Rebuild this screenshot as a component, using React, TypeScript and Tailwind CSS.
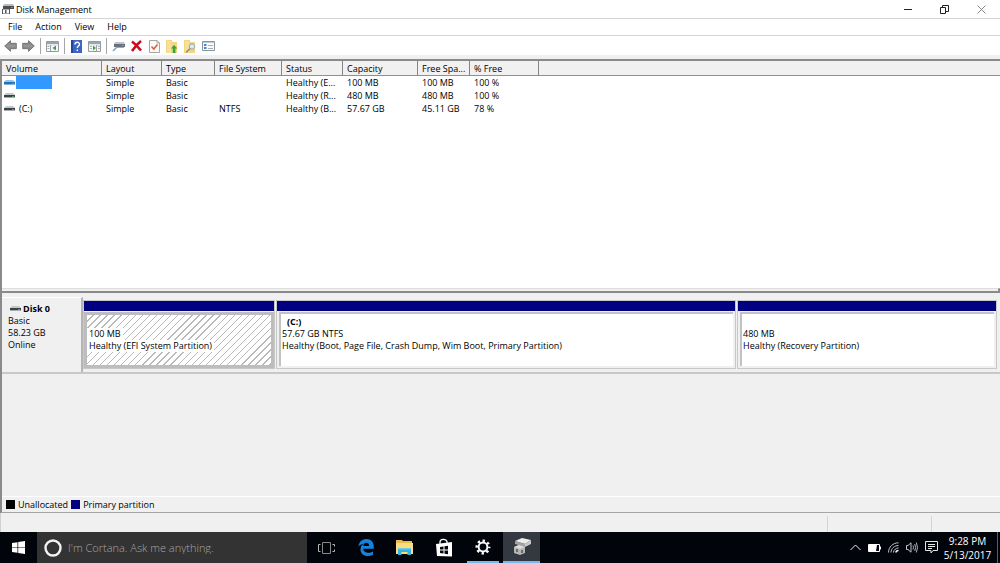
import type { ReactNode } from "react";

const columns = [
  { label: "Volume", width: "w-[100px]" },
  { label: "Layout", width: "w-[60px]" },
  { label: "Type", width: "w-[53px]" },
  { label: "File System", width: "w-[67px]" },
  { label: "Status", width: "w-[61px]" },
  { label: "Capacity", width: "w-[75px]" },
  { label: "Free Spa...", width: "w-[52px]" },
  { label: "% Free", width: "w-[69px]" },
];

const volumes = [
  { name: "", selected: true, cells: ["Simple", "Basic", "", "Healthy (E...", "100 MB", "100 MB", "100 %"] },
  { name: "", selected: false, cells: ["Simple", "Basic", "", "Healthy (R...", "480 MB", "480 MB", "100 %"] },
  { name: "(C:)", selected: false, cells: ["Simple", "Basic", "NTFS", "Healthy (B...", "57.67 GB", "45.11 GB", "78 %"] },
];

const partitions = [
  { name: "", size: "100 MB", status: "Healthy (EFI System Partition)", selected: true },
  {
    name: "(C:)",
    size: "57.67 GB NTFS",
    status: "Healthy (Boot, Page File, Crash Dump, Wim Boot, Primary Partition)",
    selected: false,
  },
  { name: "", size: "480 MB", status: "Healthy (Recovery Partition)", selected: false },
];

function DriveIcon({ selected = false }: { selected?: boolean }) {
  return (
    <svg width="11" height="6" viewBox="0 0 11 6" className="shrink-0">
      <path d="M2 0h7l2 2H0z" fill={selected ? "#8cc4f5" : "#c4c7c9"} />
      <path d="M0 2h11v2H0z" fill={selected ? "#2c6ea8" : "#3d4244"} />
      <path d="M8 3h2v1H8z" fill="#3fae6c" />
      <path d="M0 4h11v1H0z" fill={selected ? "#7fb6e6" : "#a9adaf"} />
    </svg>
  );
}

function AppIcon() {
  return (
    <svg width="13" height="12" viewBox="0 0 13 12" className="shrink-0">
      <path d="M3 1h9l1 2-1 3H2V3z" fill="#b9bcbe" />
      <path d="M2 3h11v3H2z" fill="#4a4e50" />
      <path d="M10 4h2v1h-2z" fill="#39b06a" />
      <path d="M1 6h8v5H1z" fill="#a4a7a9" />
      <path d="M2 7h2v3H2zM6 7h2v3H6z" fill="#fff" />
      <path d="M1 6h1v5H1zM4 7h1v3H4zM8 6h1v5H8z" fill="#55595b" />
    </svg>
  );
}

function ArrowIcon({ forward = false }: { forward?: boolean }) {
  return (
    <svg width="13" height="12" viewBox="0 0 13 12" className={forward ? "rotate-180" : ""}>
      <path d="M.7 6 6.500.7v2.600h5.800v5.400H6.500v2.600z" fill="#8b8b8b" stroke="#707070" strokeWidth="0.900" />
      <path d="M3 6h8.500" stroke="#a0a0a0" strokeWidth="1" />
    </svg>
  );
}

function PaneIcon({ right = false }: { right?: boolean }) {
  return (
    <svg width="13" height="12" viewBox="0 0 13 12">
      <path d="M.5 1.500h12v10H.5z" fill="#f7f8f9" stroke="#969b9f" />
      <path d="M1 2h11v2H1z" fill="#9da5ac" />
      <path d="M1 5h11" stroke="#d4d8db" />
      {right ? (
        <>
          <path d="M8.500 5v6" stroke="#a0a5a9" />
          <path d="M10 6.500h2M10 8.500h2M2 6.500h2M2 8.500h2" stroke="#a9b3bc" />
          <path d="m5 5.500 3 2.500-3 2.500z" fill="#36a936" />
        </>
      ) : (
        <>
          <path d="M4.500 5v6" stroke="#a0a5a9" />
          <path d="M1.500 6.500h2M1.500 8.500h2" stroke="#a9b3bc" />
          <path d="M10 5.500 6.500 8l3.500 2.500z" fill="#36a936" />
        </>
      )}
    </svg>
  );
}

function HelpIcon() {
  return (
    <svg width="11" height="13" viewBox="0 0 11 13">
      <path d="M0 0h11v13H0z" fill="#3f65c2" />
      <path d="M0 0h2v13H0z" fill="#2446a0" />
      <path d="M4 4.500c0-3 4.500-3 4.500-.3C8.500 6 6.300 6 6.300 8M6.300 9.500v1.500" fill="none" stroke="#fff" strokeWidth="1.400" />
    </svg>
  );
}

function DriveKeyIcon() {
  return (
    <svg width="13" height="12" viewBox="0 0 13 12">
      <path d="M3 2h9l1 2H2z" fill="#c0c5c9" />
      <path d="M2 4h11v3H2z" fill="#69727a" />
      <path d="M10 5h2v1h-2z" fill="#47b984" />
      <path d="M4 7h8v1H4z" fill="#a4abb0" />
      <path d="m5 7-4 4" stroke="#7fa0b6" strokeWidth="1.500" />
    </svg>
  );
}

function DeleteIcon() {
  return (
    <svg width="13" height="12" viewBox="0 0 13 12">
      <path d="M2 1.500Q6 4.500 11 10.500M11 1Q6.500 4.500 2 11" fill="none" stroke="#cc0a1e" strokeWidth="2.600" />
    </svg>
  );
}

function CheckDocIcon() {
  return (
    <svg width="11" height="13" viewBox="0 0 11 13">
      <path d="M.5.5H8L10.500 3v9.500H.5z" fill="#fafafa" stroke="#a5a5a5" />
      <path d="M8 .5V3h2.500" fill="none" stroke="#a5a5a5" />
      <path d="m2.500 6.500 2.300 2.500 3.700-4.500" fill="none" stroke="#e05a34" strokeWidth="1.500" />
    </svg>
  );
}

function FolderIcon({ search = false }: { search?: boolean }) {
  return (
    <svg width="12" height="13" viewBox="0 0 12 13">
      <path d="M0 0h6v2h5v11H0z" fill="#f3d681" />
      <path d="M1 1h4v12H1z" fill="#f8e09a" />
      {search ? (
        <>
          <path d="m6 8.500-4 4" stroke="#9a8a63" strokeWidth="1.500" />
          <circle cx="8" cy="6.500" r="2.700" fill="#d9edf5" stroke="#8aa5ad" />
        </>
      ) : (
        <path d="M8 5 5 8.500h1.800V13h2.600V8.500H11.500z" fill="#37a637" />
      )}
    </svg>
  );
}

function PropertiesIcon() {
  return (
    <svg width="13" height="11" viewBox="0 0 13 11">
      <path d="M.5.5h12v9H.5z" fill="#f8fafb" stroke="#8b949b" />
      <path d="M1 1.500h11" stroke="#c2cad0" />
      <path d="M2 3h2.500v2H2zM2 6h2.500v2H2z" fill="#4388c7" />
      <path d="M6 4.500h5M6 7.500h5" stroke="#a8b0b6" />
    </svg>
  );
}

function ToolButton({ label, children }: { label: string; children: ReactNode }) {
  return (
    <button aria-label={label} className="flex h-[18px] w-[18px] items-center justify-center">
      {children}
    </button>
  );
}

function ToolSeparator() {
  return (
    <div className="flex w-1.5 justify-center py-px">
      <div className="w-px bg-[#a5a5a5]" />
    </div>
  );
}

function TitleBar() {
  return (
    <header className="flex h-[19px] shrink-0 items-center border-b border-[#d5d5d5] bg-white pl-px">
      <AppIcon />
      <h1 className="flex-1 pl-0.5">Disk Management</h1>
      <button aria-label="Minimize" className="flex h-full w-9 items-center justify-center">
        <svg width="9" height="9" viewBox="0 0 9 9">
          <path d="M0 4.500h8" stroke="#222" />
        </svg>
      </button>
      <button aria-label="Restore" className="flex h-full w-9 items-center justify-center">
        <svg width="9" height="9" viewBox="0 0 9 9" fill="none" stroke="#222">
          <path d="M.5 2.500h5v6h-5z" />
          <path d="M2.500 2.500v-2h6v6h-3" />
        </svg>
      </button>
      <button aria-label="Close" className="flex h-full w-[38px] items-center justify-center">
        <svg width="9" height="9" viewBox="0 0 9 9">
          <path d="m.5.5 8 8M8.500.5l-8 8" stroke="#777" strokeWidth="0.900" />
        </svg>
      </button>
    </header>
  );
}

function VolumeTable() {
  return (
    <section className="h-[234px] shrink-0 border-l-2 border-t-2 border-[#8a8a8a] bg-white">
      <div className="flex h-full flex-col">
        <div className="flex-1">
          <table className="w-full table-fixed border-separate border-spacing-0 text-left">
            <thead>
              <tr className="h-[15px] bg-[#f1f1f1]">
                {columns.map((column) => (
                  <th
                    key={column.label}
                    className={`${column.width} overflow-hidden border-b border-r border-b-[#8f8f8f] border-r-[#858585] p-0 pl-1 font-normal whitespace-nowrap`}
                  >
                    {column.label}
                  </th>
                ))}
                <td className="border-b border-[#8f8f8f] p-0" />
              </tr>
            </thead>
            <tbody>
              {volumes.map((volume, index) => (
                <tr key={index} className="h-[13px]">
                  <td className="p-0">
                    <div className="flex h-[13px] items-center pl-0.5">
                      <DriveIcon selected={volume.selected} />
                      <span className={volume.selected ? "ml-px h-[13px] w-9 bg-[#3399ff]" : "pl-1"}>{volume.name}</span>
                    </div>
                  </td>
                  {volume.cells.map((cell, i) => (
                    <td key={i} className="p-0 pl-1 whitespace-nowrap">
                      {cell}
                    </td>
                  ))}
                  <td className="p-0" />
                </tr>
              ))}
            </tbody>
          </table>
        </div>
        {/* Splitter */}
        <div className="h-[5px] border-b-2 border-r-2 border-t border-b-[#8a8a8a] border-r-[#8a8a8a] border-t-[#dedede] bg-[#f0f0f0]" />
      </div>
    </section>
  );
}

function Partition({ name, size, status, selected }: (typeof partitions)[number]) {
  return (
    <article className="flex flex-col border border-[#c8c8c8] bg-[#f0f0f0]">
      <div className="h-2.5 bg-[#000080]" />
      <div
        className={`mt-px flex-1 leading-3 ${
          selected
            ? "border-[3px] border-[#bdbdbd] bg-[repeating-linear-gradient(135deg,#ffffff_0px,#ffffff_4px,#b9b9b9_4px,#b9b9b9_5px)] pt-px"
            : "mx-0.5 mb-0.5 border-l-2 border-t-2 border-[#c2c2c2] bg-white pl-px pt-0.5"
        }`}
      >
        <h3 className="h-3 pl-[5px] font-bold">{name}</h3>
        <p>
          <span className={selected ? "inline-block bg-white px-0.5" : ""}>{size}</span>
        </p>
        <p>
          <span className={selected ? "inline-block bg-white px-0.5" : ""}>{status}</span>
        </p>
      </div>
    </article>
  );
}

function DiskPane() {
  return (
    <section className="flex flex-1 flex-col border-b border-l-2 border-[#a5a5a5] border-l-[#8a8a8a]">
      <div className="mt-1 flex h-[77px] border-b-2 border-[#c8c8c8]">
        <div className="w-[81px] border-r-2 border-t border-r-[#b5b5b5] border-t-white pl-1.5 pt-[5px] leading-3">
          <h2 className="flex items-center gap-0.5 pl-0.5 font-bold">
            <DriveIcon />
            Disk 0
          </h2>
          <p>Basic</p>
          <p>58.23 GB</p>
          <p>Online</p>
        </div>
        <div className="grid flex-1 grid-cols-[192fr_460fr_260fr] gap-px pb-[3px] pr-[3px] pt-[3px]">
          {partitions.map((partition) => (
            <Partition key={partition.status} {...partition} />
          ))}
        </div>
      </div>
      <div className="flex-1" />
      <div className="flex h-4 items-center border-t border-white pl-1">
        <span className="mr-[3px] h-[9px] w-[9px] bg-black" />
        Unallocated
        <span className="ml-[3px] mr-[3px] h-[9px] w-[9px] bg-[#000080]" />
        Primary partition
      </div>
    </section>
  );
}

function TaskButton({ label, state = "", children }: { label: string; state?: string; children: ReactNode }) {
  return (
    <button
      aria-label={label}
      className={`flex w-[37px] flex-col items-center ${state === "active" ? "bg-[#343840]" : ""}`}
    >
      <span className="flex flex-1 items-center">{children}</span>
      {state && <span className={`h-0.5 bg-[#76b9ed] ${state === "active" ? "w-full" : "w-8"}`} />}
    </button>
  );
}

function Taskbar() {
  return (
    <footer className="flex h-[31px] shrink-0 bg-[#02040b] text-white">
      <button aria-label="Start" className="flex w-[37px] items-center justify-center">
        <svg width="13" height="13" viewBox="0 0 13 13" fill="#fff">
          <path d="M0 2 5.500 1.200V6.200H0zM6.200 1.100 13 0v6.200H6.200zM0 6.800h5.500v5L0 11zM6.200 6.800H13V13l-6.800-1z" />
        </svg>
      </button>
      <label className="flex w-[270px] items-center gap-1.5 bg-[#333333] pl-[7px]">
        <svg width="18" height="18" viewBox="0 0 18 18">
          <circle cx="9" cy="9" r="7.500" fill="none" stroke="#f2f2f2" strokeWidth="2.400" />
        </svg>
        <input
          aria-label="Search"
          placeholder="I'm Cortana. Ask me anything."
          className="min-w-0 flex-1 bg-transparent text-[11px] font-light outline-none placeholder:text-[#a5a5a5]"
        />
      </label>
      <nav className="ml-px flex flex-1 gap-0.5">
        <TaskButton label="Task View">
          <svg width="17" height="12" viewBox="0 0 17 12" fill="none" stroke="#b5b5b5">
            <path d="M4.500.5h8v11h-8z" stroke="#888" />
            <path d="M2.500 2.500h-2v7h2M14.500 2.500h2v2M14.500 9.500h2v-2" />
          </svg>
        </TaskButton>
        <TaskButton label="Edge">
          <svg width="16" height="17" viewBox="0 0 16 17">
            <path
              d="M.3 7.600C1 2.800 4.300 0 8.400 0 13 0 15.800 3.300 15.800 7.800v2H5.200c.2 2.800 2.400 4 5.100 4 1.800 0 3.400-.5 4.700-1.300v3.300c-1.500.8-3.300 1.200-5.300 1.200-4.400 0-7.200-2.600-7.200-6.500 0-2.600 1.300-4.700 3.400-5.800C3.500 5 1.600 6 .3 7.600zM5.300 7h5.800c0-2.100-1-3.200-2.800-3.200C6.600 3.800 5.500 5.100 5.300 7z"
              fill="#1583dc"
            />
          </svg>
        </TaskButton>
        <TaskButton label="File Explorer">
          <svg width="17" height="15" viewBox="0 0 17 15">
            <path d="M0 0h6l1 1h9v3H0z" fill="#e9bb4c" />
            <path d="M0 3h17v11H0z" fill="#fbdc82" />
            <path d="M2 8h13v7h-3.500v-3h-6v3H2z" fill="#38b3d8" />
            <path d="M2 8h13v1.500H2z" fill="#70cde7" />
          </svg>
        </TaskButton>
        <TaskButton label="Store">
          <svg width="18" height="20" viewBox="0 0 18 20">
            <path d="M5 6V4c0-3.500 6-3.500 7-.5V5" fill="none" stroke="#fff" strokeWidth="1.300" />
            <path d="m1 6 16-2v14.500L2 18z" fill="#fff" />
            <path d="m5 9 3.500-.5v3H5zM9.500 8.300l3.500-.5v3.700H9.500zM5 12.500h3.500v3L5 15zM9.500 12.500H13v3.700l-3.500-.5z" fill="#05070e" />
          </svg>
        </TaskButton>
        <TaskButton label="Settings" state="open">
          <svg width="16" height="16" viewBox="0 0 16 16" fill="none" stroke="#fff">
            <circle cx="8" cy="8" r="4.400" strokeWidth="2" />
            <circle cx="8" cy="8" r="6.300" strokeWidth="2.400" strokeDasharray="2.400 2.548" strokeDashoffset="1.200" />
          </svg>
        </TaskButton>
        <TaskButton label="Disk Management" state="active">
          <svg width="18" height="17" viewBox="0 0 18 17">
            <path d="m2 3 7-3 9 2-6 4z" fill="#ececec" />
            <path d="m2 3 10 3v3L2 6z" fill="#a4a4a4" />
            <path d="m12 6 6-4v4l-6 3z" fill="#c9c9c9" />
            <path d="m1 9 5-2 6 2v6l-5 2-6-2z" fill="#b5b5b5" />
            <path d="m1 9 6 2 5-2-6-2z" fill="#dcdcdc" />
            <path d="M3 11h2v3H3zM8 12h2v3H8z" fill="#6c6c6c" />
          </svg>
        </TaskButton>
      </nav>
      <div className="flex items-center gap-[7px]">
        <button aria-label="Show hidden icons">
          <svg width="11" height="7" viewBox="0 0 11 7">
            <path d="m.5 6 5-5 5 5" fill="none" stroke="#eee" />
          </svg>
        </button>
        <button aria-label="Battery">
          <svg width="13" height="8" viewBox="0 0 13 8">
            <path d="M.5.5h11v7H.5z" fill="none" stroke="#fff" />
            <path d="M1 1h8L8 7H1z" fill="#fff" />
            <path d="M12.500 2.500v3" stroke="#fff" />
          </svg>
        </button>
        <button aria-label="Network">
          <svg width="11" height="11" viewBox="0 0 11 11" fill="none" stroke="#c5c5c5">
            <path d="M.5 10.500C.5 5 5 .8 10.500.8M3 10.500c0-4 3.500-7 7.500-7M5.500 10.500c0-2.500 2.500-4.500 5-4.500" />
            <path d="M8 10.500c0-1.300 1.200-2 2.500-2" stroke="#fff" strokeWidth="1.500" />
          </svg>
        </button>
        <button aria-label="Volume">
          <svg width="12" height="11" viewBox="0 0 12 11" fill="none" stroke="#c5c5c5">
            <path d="M.5 3.500H2L5 .8v9.400L2 7.500H.5z" />
            <path d="M7 3.500q1 2 0 4M8.700 2q2 3.500 0 7M10.300.5q2.500 5 0 10" strokeWidth="0.900" />
          </svg>
        </button>
        <button aria-label="Notifications">
          <svg width="13" height="13" viewBox="0 0 13 13" fill="none" stroke="#e6e6e6">
            <path d="M.5.5h12v9H8l-2 2.500V9.500H.5z" />
            <path d="M3 3.500h7M3 5.500h7M3 7.500h4" />
          </svg>
        </button>
      </div>
      <time className="flex w-[59px] flex-col items-center justify-center text-[10px] leading-[14px]">
        <span>9:28 PM</span>
        <span>5/13/2017</span>
      </time>
      <div className="w-[3px] border-l border-[#5a5c60]" />
    </footer>
  );
}

export default function App() {
  return (
    <div className="flex h-screen flex-col bg-[#f0f0f0] font-['Open_Sans',sans-serif] text-[9px] leading-[13px] text-black">
      <TitleBar />
      <nav className="flex h-[17px] shrink-0 items-center gap-[13px] border-b border-[#d5d5d5] bg-white pb-px pl-2">
        <button>File</button>
        <button>Action</button>
        <button>View</button>
        <button>Help</button>
      </nav>
      <div className="h-[23px] shrink-0">
        <div className="flex bg-white pl-px pt-px">
          <ToolButton label="Back"><ArrowIcon /></ToolButton>
          <ToolButton label="Forward"><ArrowIcon forward /></ToolButton>
          <ToolSeparator />
          <ToolButton label="Show console tree"><PaneIcon /></ToolButton>
          <ToolSeparator />
          <ToolButton label="Help topics"><HelpIcon /></ToolButton>
          <ToolButton label="Show action pane"><PaneIcon right /></ToolButton>
          <ToolSeparator />
          <ToolButton label="Rescan disks"><DriveKeyIcon /></ToolButton>
          <ToolButton label="Delete"><DeleteIcon /></ToolButton>
          <ToolButton label="Properties"><CheckDocIcon /></ToolButton>
          <ToolButton label="Open"><FolderIcon /></ToolButton>
          <ToolButton label="Explore"><FolderIcon search /></ToolButton>
          <ToolButton label="Settings list"><PropertiesIcon /></ToolButton>
        </div>
      </div>
      <VolumeTable />
      <DiskPane />
      {/* Status bar */}
      <div className="flex h-[19px] shrink-0 border-l border-[#d0d0d0] pt-[3px]">
        <div className="flex-1" />
        <div className="w-[104px] border-l border-[#d5d5d5]" />
        <div className="w-[69px] border-l border-[#d5d5d5]" />
      </div>
      <Taskbar />
    </div>
  );
}
